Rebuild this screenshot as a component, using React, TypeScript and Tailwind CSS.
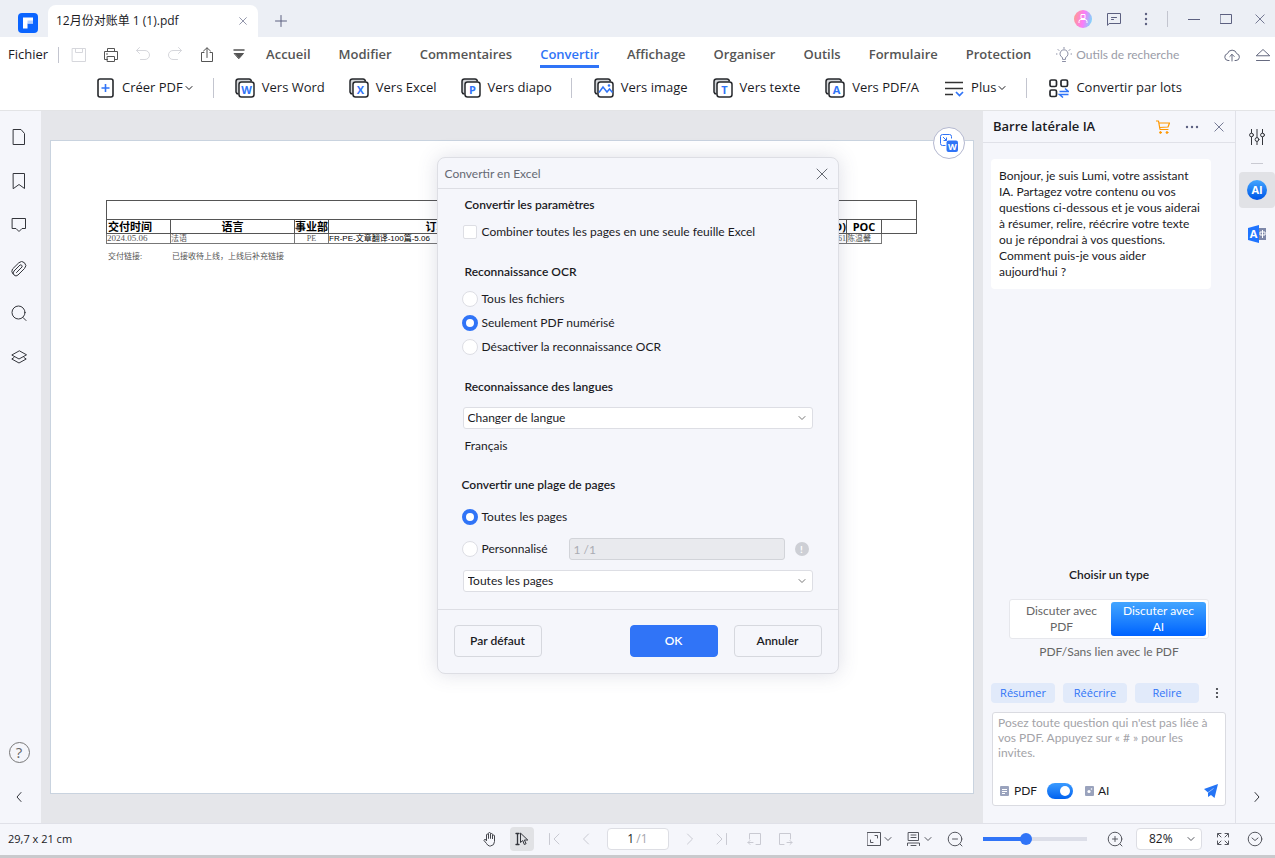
import { useState } from 'react';
import type { ReactNode } from 'react';

const MENU = ['Accueil', 'Modifier', 'Commentaires', 'Convertir', 'Affichage', 'Organiser', 'Outils', 'Formulaire', 'Protection'];

function Icon({ children, size = 16, box = 16, className = '', width = 1 }: {
  children: ReactNode; size?: number; box?: number; className?: string; width?: number;
}) {
  return (
    <svg width={size} height={size} viewBox={`0 0 ${box} ${box}`} fill="none" stroke="currentColor"
      strokeWidth={width} strokeLinecap="round" strokeLinejoin="round" className={`shrink-0 ${className}`} aria-hidden="true">
      {children}
    </svg>
  );
}

const Chevron = ({ size = 8, className = '' }: { size?: number; className?: string }) => (
  <Icon size={size} box={8} className={className}><path d="M1 2.5 4 5.5 7 2.5" /></Icon>
);

const Close = ({ size = 12 }: { size?: number }) => (
  <Icon size={size} box={12}><path d="M1 1 11 11M11 1 1 11" /></Icon>
);

const Divider = ({ className }: { className: string }) => <span className={`w-px shrink-0 bg-[#c3c5cf] ${className}`} />;

function TitleBar() {
  return (
    <header className="flex h-[37px] items-end bg-[#eceff5] text-[#5c6080]">
      <div className="flex h-[37px] w-12 items-center justify-end pt-2 pr-[10px]">
        <svg width="20" height="20" viewBox="0 0 20 20" aria-hidden="true">
          <rect width="20" height="20" rx="4" fill="#0a64ff" />
          <path d="M5 4.5h10v6H9.500v5H5z" fill="#fff" />
          <path d="M9.500 7.500H15v3H9.500z" fill="#b5d0ff" />
        </svg>
      </div>
      <div className="flex h-8 w-[210px] items-center justify-between rounded-t-lg bg-white pr-[11px] pl-2">
        <span className="text-[12px] text-[#1b1b1f]">12月份对账单 1 (1).pdf</span>
        <button aria-label="Fermer l'onglet"><Close size={8} /></button>
      </div>
      <button aria-label="Nouvel onglet" className="ml-[17px] flex h-8 items-center">
        <Icon size={12} box={12}><path d="M6 .5v11M.5 6h11" /></Icon>
      </button>
      <div className="ml-auto flex h-[37px] items-center pr-[10px]">
        <button aria-label="Compte">
          <svg width="18" height="18" viewBox="0 0 18 18" aria-hidden="true">
            <defs>
              <linearGradient id="avatar" x1="0" y1="0.300" x2="1" y2="0.500">
                <stop offset="0" stopColor="#ff9a8f" /><stop offset=".55" stopColor="#fb7bfa" /><stop offset="1" stopColor="#7fd4fb" />
              </linearGradient>
            </defs>
            <circle cx="9" cy="9" r="9" fill="url(#avatar)" />
            <path d="M7 4.500h4v4H7zM5 13v-1.500q0-2 2-2h4q2 0 2 2V13" fill="none" stroke="#fff" strokeLinejoin="round" />
          </svg>
        </button>
        <button aria-label="Messages" className="ml-[15px]">
          <Icon size={14} box={14}><path d="M.5 13V1.500h13v10H2.500zM4.500 5.500h5M4.500 7.500h2" /></Icon>
        </button>
        <button aria-label="Plus d'options" className="ml-[17px]">
          <Icon box={16} className="fill-current stroke-none"><circle cx="8" cy="3" r="1.200" /><circle cx="8" cy="8" r="1.200" /><circle cx="8" cy="13" r="1.200" /></Icon>
        </button>
        <Divider className="ml-[13px] h-4" />
        <button aria-label="Réduire" className="ml-5"><Icon size={12} box={12}><path d="M0 6.500h12" /></Icon></button>
        <button aria-label="Agrandir" className="ml-5"><Icon size={12} box={12}><path d="M.5 1.500h11v9H.5z" /></Icon></button>
        <button aria-label="Fermer" className="ml-[23px]"><Close size={10} /></button>
      </div>
    </header>
  );
}

function MenuBar() {
  return (
    <nav className="flex h-[35px] items-center bg-white text-[13px] text-[#555]">
      <a href="#fichier" className="pl-2 text-[#1b1b1f]">Fichier</a>
      <Divider className="ml-[10px] h-4" />
      <div className="ml-3 flex items-center gap-4">
        <button aria-label="Enregistrer" className="text-[#d6d7dc]">
          <Icon><path d="M1.500 1.500h13v13h-13zM4.500 1.500v4h7v-4" /></Icon>
        </button>
        <button aria-label="Imprimer">
          <Icon><path d="M4.500 4.500v-3h7v3M4.500 12.500h-3v-8h13v8h-3M4.500 9.500h7v5h-7zM3.500 7h1" /></Icon>
        </button>
        <button aria-label="Annuler l'action" className="text-[#d6d7dc]">
          <Icon><path d="M4.500.5l-3 3 3 3M1.500 3.500h8.500a4.500 4.500 0 0 1 0 9H5.500" /></Icon>
        </button>
        <button aria-label="Rétablir" className="text-[#d6d7dc]">
          <Icon><path d="M11.500.5l3 3-3 3M14.500 3.500H6a4.500 4.500 0 0 0 0 9h4.500" /></Icon>
        </button>
        <button aria-label="Partager">
          <Icon><path d="M5 5.500H2.500v9h11v-9H11M8 10.500V1M4.500 4 8 .8 11.500 4" /></Icon>
        </button>
        <button aria-label="Personnaliser">
          <Icon><path d="M3 3h10" strokeWidth="1.500" /><path d="M3.500 6.500h9L8 11.500z" fill="currentColor" /></Icon>
        </button>
      </div>
      <div className="ml-[19px] flex h-full gap-7 font-semibold">
        {MENU.map(name => (
          <a key={name} href={`#${name.toLowerCase()}`}
            className={`flex h-[31px] items-center border-b-[3px] pt-[7px] ${name === 'Convertir' ? 'border-[#3074f7] text-[#3074f7]' : 'border-transparent'}`}>
            {name}
          </a>
        ))}
      </div>
      <label className="ml-[25px] flex min-w-0 items-center gap-1 font-['Lato',sans-serif] text-[12px] text-[#9a9ca8]">
        <Icon className="text-[#8b8fa5]"><path d="M6.500 12V10.500a4 4 0 1 1 3 0V12zM6.500 14.500h3M8 1.500V0M3 3.500 2 2.500M13 3.500l1-1M1 7H0M15 7h1" /></Icon>
        <input placeholder="Outils de recherche" className="w-[110px] outline-none placeholder:text-[#9a9ca8]" />
      </label>
      <div className="ml-auto flex items-center gap-4 pr-[5px] text-[#666a80]">
        <button aria-label="Nuage"><Icon><path d="M5 13.500H4a3.500 3.500 0 0 1-.5-6.900 4.800 4.800 0 0 1 9.200 0A3.500 3.500 0 0 1 12 13.500h-1M8 14V7.500M5.800 9.500 8 7.300l2.200 2.200" /></Icon></button>
        <button aria-label="Réduire le ruban"><Icon size={14} box={14}><path d="M.5 7.500 7 1.500l6.500 6zM.5 12.500h13" /></Icon></button>
      </div>
    </nav>
  );
}

function StackIcon({ letter }: { letter?: string }) {
  return (
    <svg width="20" height="20" viewBox="0 0 20 20" fill="none" aria-hidden="true" className="shrink-0">
      <path d="M3.500 16A2.500 2.500 0 0 1 1 14V3.500Q1 1 3.500 1H14q2 0 2.500 2.500" fill="#d3d5d8" stroke="#26282c" strokeWidth="1.500" />
      <rect x="4" y="4" width="15" height="15" rx="2.500" fill="#fff" stroke="#26282c" strokeWidth="1.500" />
      {letter
        ? <text x="11.500" y="15.500" textAnchor="middle" fontSize="11" fontWeight="700" fill="#3074f7" className="font-['Open_Sans',sans-serif]">{letter}</text>
        : <><path d="M5 14.500 9 9l4 5 2.500-3 3 3.500" stroke="#3074f7" strokeWidth="1.500" /><circle cx="15" cy="7.500" r="1.300" fill="#3074f7" /></>}
    </svg>
  );
}

function Tool({ label, letter, children, chevron }: { label: string; letter?: string; children?: ReactNode; chevron?: boolean }) {
  return (
    <button className="flex items-center gap-[7px] whitespace-nowrap">
      {children ?? <StackIcon letter={letter} />}
      <span className="flex items-center gap-[2px]">{label}{chevron && <Chevron />}</span>
    </button>
  );
}

function Toolbar() {
  return (
    <div className="flex h-[39px] items-center border-b border-[#e3e4e6] bg-white pb-[6px] pl-[97px] text-[13px] text-[#1b1b1f]">
      <Tool label="Créer PDF" chevron>
        <svg width="18" height="20" viewBox="0 0 18 20" fill="none" aria-hidden="true">
          <rect x="1" y="1" width="15" height="18" rx="2" stroke="#26282c" strokeWidth="1.600" />
          <path d="M8.500 6v8M4.500 10h8" stroke="#3074f7" strokeWidth="1.600" />
        </svg>
      </Tool>
      <Divider className="mr-[21px] ml-5 h-5" />
      <div className="flex gap-6">
        <Tool label="Vers Word" letter="W" />
        <Tool label="Vers Excel" letter="X" />
        <Tool label="Vers diapo" letter="P" />
      </div>
      <Divider className="mr-[22px] ml-[19px] h-5" />
      <div className="flex gap-[25px]">
        <Tool label="Vers image" />
        <Tool label="Vers texte" letter="T" />
        <Tool label="Vers PDF/A" letter="A" />
        <Tool label="Plus" chevron>
          <svg width="20" height="20" viewBox="0 0 20 20" fill="none" aria-hidden="true">
            <path d="M1 4.500h18M1 10.500h18M1 16.500h8" stroke="#333" strokeWidth="1.500" />
            <path d="m12 14 3.500 3.500L19 14" stroke="#3074f7" strokeWidth="1.700" />
          </svg>
        </Tool>
      </div>
      <Divider className="mr-[22px] ml-5 h-5" />
      <Tool label="Convertir par lots">
        <svg width="20" height="20" viewBox="0 0 20 20" fill="none" aria-hidden="true">
          <g stroke="#26282c" strokeWidth="1.700">
            <rect x="1" y="2" width="6.500" height="6.500" rx="1.500" /><rect x="12" y="2" width="6.500" height="6.500" rx="1.500" /><rect x="1" y="12" width="6.500" height="6.500" rx="1.500" />
          </g>
          <path d="M10.500 13.500h9L16 10.500M19.500 16.500h-9l3.500 3" stroke="#3074f7" strokeWidth="1.500" />
        </svg>
      </Tool>
    </div>
  );
}

function LeftRail() {
  return (
    <aside className="flex w-[41px] shrink-0 flex-col items-center bg-[#f5f6fb] pt-[18px] pr-[3px] text-[#33353b]">
      <div className="flex flex-col gap-7">
        <button aria-label="Vignettes"><Icon><path d="M2.500.5h7.500l3.500 4v11h-11z" /></Icon></button>
        <button aria-label="Signets"><Icon><path d="M2.500.5h11v15L8 11.500l-5.500 4z" /></Icon></button>
        <button aria-label="Commentaires"><Icon><path d="M1.500 1.500h13v10H11l-3 3-3-3H1.500z" /></Icon></button>
        <button aria-label="Pièces jointes"><Icon><path d="M5.500 11.500 11 6A1.500 1.500 0 0 0 9 4L3 10a2.700 2.700 0 0 0 4 4l6.500-6.500a4 4 0 0 0-5.700-5.700L1.500 8A4 4 0 0 0 2 13" /></Icon></button>
        <button aria-label="Rechercher"><Icon><circle cx="7.500" cy="7.500" r="6.500" /><path d="m12 12.500 3 3" /></Icon></button>
        <button aria-label="Calques"><Icon><path d="M8 2 .8 6 8 10l7.200-4zM3 8.500.8 10 8 14l7.200-4L13 8.500" /></Icon></button>
      </div>
      <button aria-label="Aide" className="mt-auto flex size-[21px] items-center justify-center rounded-full border border-[#777] text-[15px] leading-none text-[#666]">?</button>
      <button aria-label="Replier" className="mt-7 mb-5"><Icon size={12} box={12}><path d="M8 1.500 4 6l4 4.500" /></Icon></button>
    </aside>
  );
}

function PdfPage() {
  return (
    <section className="min-w-0 flex-1 bg-[#e5e6ea] px-[9px] py-[29px]">
      <div className="h-full overflow-hidden border border-[#c9d3df] bg-white pt-[59px] pl-[55px]">
        <table className="w-[811px] table-fixed border-collapse text-black">
          <colgroup>
            <col className="w-16" /><col className="w-[124px]" /><col className="w-[34px]" /><col className="w-[216px]" />
            <col className="w-[302px]" /><col className="w-[35px]" /><col className="w-[35px]" />
          </colgroup>
          <tbody>
            <tr className="h-[19px]"><td colSpan={7} className="border border-[#555] p-0" /></tr>
            <tr className="h-[14px] text-[11px] leading-[13px] font-bold whitespace-nowrap [&>th]:border [&>th]:border-[#555]">
              <th className="p-0 pl-px text-left">交付时间</th><th className="p-0">语言</th><th className="p-0">事业部</th><th className="p-0">订单</th>
              <th className="p-0 text-right">金额(USD)</th><th className="p-0">POC</th><th className="p-0" />
            </tr>
            <tr className="h-[10px] font-['Liberation_Serif','Noto_Sans_CJK_SC',serif] text-[8px] leading-[9px] whitespace-nowrap text-[#555] [&>td]:p-0">
              <td className="border border-[#777] text-[9px]">2024.05.06</td>
              <td className="border border-[#777]">法语</td>
              <td className="border border-[#777] text-center">PE</td>
              <td className="border border-[#777] font-['Liberation_Sans','Noto_Sans_CJK_SC',sans-serif] text-black">FR-PE-文章翻译-100篇-5.06</td>
              <td className="border border-[#777] text-right">61</td>
              <td className="border border-[#777]">陈温馨</td>
              <td />
            </tr>
          </tbody>
        </table>
        <p className="flex pt-[6px] pl-[2px] text-[8px] leading-[11px] text-[#555]">
          <span className="w-16">交付链接:</span><span>已接收待上线，上线后补充链接</span>
        </p>
      </div>
    </section>
  );
}

function ConvertBadge() {
  return (
    <button aria-label="Convertir en Word" className="absolute top-[127px] right-[310px] flex size-8 items-center justify-center rounded-full border border-[#b4b8d0] bg-white">
      <svg width="18" height="18" viewBox="0 0 18 18" fill="none" aria-hidden="true">
        <path d="M5.500 11.500h-3a2 2 0 0 1-2-2v-7q0-2 2-2h7q2 0 2 2v2M3 3l3.500 3.500M6.500 3.500v3h-3" stroke="#3074f7" />
        <rect x="6.500" y="6.500" width="11.500" height="11.500" rx="2" fill="#3074f7" />
        <text x="12.300" y="15.500" textAnchor="middle" fontSize="9" fontWeight="700" fill="#fff" className="font-['Open_Sans',sans-serif]">W</text>
      </svg>
    </button>
  );
}

function AiPanel() {
  const [link, setLink] = useState(true);
  return (
    <aside className="flex w-[252px] shrink-0 flex-col bg-[#f5f6fb] text-[#1b1b1f]">
      <div className="flex h-8 items-center border-b border-[#e0e1e8] pr-[11px] pl-[10px]">
        <h2 className="text-[13px] font-semibold">Barre latérale IA</h2>
        <div className="ml-auto flex items-center gap-[15px] text-[#5c6080]">
          <button aria-label="Boutique" className="text-[#ff9800]">
            <Icon size={14} box={14}><path d="M.5 1h2l1.500 8.500h8M3 3h10.500l-1.500 4-8.500.5" strokeWidth="1.200" /><circle cx="4.500" cy="12.500" r=".9" fill="currentColor" /><circle cx="11" cy="12.500" r=".9" fill="currentColor" /></Icon>
          </button>
          <button aria-label="Options">
            <Icon size={14} box={14} className="fill-current stroke-none"><circle cx="2" cy="7" r="1.200" /><circle cx="7" cy="7" r="1.200" /><circle cx="12" cy="7" r="1.200" /></Icon>
          </button>
          <button aria-label="Fermer le panneau"><Close size={10} /></button>
        </div>
      </div>
      <p className="mx-2 mt-4 w-[220px] rounded-[4px] bg-white py-[9px] pr-2 pl-2 font-['Lato',sans-serif] text-[12px] leading-4">
        Bonjour, je suis Lumi, votre assistant IA. Partagez votre contenu ou vos questions ci-dessous et je vous aiderai à résumer, relire, réécrire votre texte ou je répondrai à vos questions. Comment puis-je vous aider aujourd'hui ?
      </p>
      <div className="mt-auto flex flex-col pb-[17px] font-['Lato',sans-serif] text-[12px] leading-4">
        <h3 className="text-center font-semibold">Choisir un type</h3>
        <div className="mx-auto mt-4 flex h-10 w-[200px] rounded-[3px] border border-[#e6e7ec] bg-white p-[2px] text-[#666]">
          <button className="flex-1 px-3">Discuter avec PDF</button>
          <button className="w-[95px] rounded-[3px] bg-linear-to-b from-[#42a5ff] to-[#0061ff] px-2 text-white">Discuter avec AI</button>
        </div>
        <p className="mt-[5px] text-center text-[#666]">PDF/Sans lien avec le PDF</p>
        <div className="mt-[23px] flex items-center gap-2 px-2 font-['Open_Sans',sans-serif] text-[11px] text-[#3074f7]">
          <button className="h-5 w-16 rounded-[4px] bg-[#e1eafa]">Résumer</button>
          <button className="h-5 w-16 rounded-[4px] bg-[#e1eafa]">Réécrire</button>
          <button className="h-5 w-16 rounded-[4px] bg-[#e1eafa]">Relire</button>
          <button aria-label="Plus d'actions" className="ml-1 text-[#33353b]">
            <Icon size={12} box={12} className="fill-current stroke-none"><circle cx="6" cy="2" r="1.100" /><circle cx="6" cy="6" r="1.100" /><circle cx="6" cy="10" r="1.100" /></Icon>
          </button>
        </div>
        <div className="mx-[9px] mt-[9px] flex h-[94px] flex-col rounded-[3px] border border-[#dadbe1] bg-white">
          <textarea aria-label="Question" placeholder="Posez toute question qui n'est pas liée à vos PDF. Appuyez sur « # » pour les invites."
            className="min-h-0 flex-1 resize-none overflow-hidden pt-[2px] pr-3 pl-[5px] leading-[15px] outline-none placeholder:text-[#a3a3a8]" />
          <div className="flex h-7 items-center px-[7px]">
            <svg width="9" height="10" viewBox="0 0 9 10" aria-hidden="true"><rect width="9" height="10" rx="1" fill="#9aa3bd" /><path d="M2 3.500h5M2 5.500h5M2 7.500h3" stroke="#fff" /></svg>
            <span className="ml-[5px] w-[21px]">PDF</span>
            <input type="checkbox" role="switch" aria-label="Lier au PDF" checked={link} onChange={e => setLink(e.target.checked)}
              className="ml-3 flex h-4 w-[26px] appearance-none items-center justify-end rounded-full bg-linear-to-b from-[#3a9bff] to-[#0061ef] px-[3px] before:size-[10px] before:rounded-full before:bg-white" />
            <svg width="9" height="10" viewBox="0 0 9 10" aria-hidden="true" className="ml-3"><rect width="9" height="10" rx="1" fill="#9aa3bd" /><circle cx="4" cy="5.500" r="1.600" fill="#fff" /><circle cx="6.500" cy="3" r=".8" fill="#fff" /></svg>
            <span className="ml-1">AI</span>
            <button aria-label="Envoyer" className="ml-auto">
              <svg width="14" height="14" viewBox="0 0 14 14" aria-hidden="true"><path d="M14 0 10.500 14 7 11 4 13V8.500L0 5z" fill="#2474f5" /><path d="M4 8.500 9.500 4.500" stroke="#fff" strokeWidth=".5" fill="none" /></svg>
            </button>
          </div>
        </div>
      </div>
    </aside>
  );
}

function RightRail() {
  return (
    <aside className="flex w-10 shrink-0 flex-col items-center border-l border-[#e0e1e8] bg-[#f5f6fb] pt-[18px] pl-[3px] text-[#33353b]">
      <button aria-label="Réglages"><Icon><path d="M2.500 0v4M2.500 8v8M8 0v8.500M8 12.500V16M13.500 0v4M13.500 8v8" /><circle cx="2.500" cy="6" r="1.900" /><circle cx="8" cy="10.500" r="1.900" /><circle cx="13.500" cy="6" r="1.900" /></Icon></button>
      <span className="mt-[18px] h-px w-3 bg-[#c9cad2]" />
      <button className="mt-2 flex size-9 items-center justify-center rounded-[4px] bg-[#e1e2e6]" aria-label="Assistant">
        <span className="flex size-5 items-center justify-center rounded-full bg-linear-to-b from-[#42a5ff] to-[#0051e6] text-[11px] font-bold text-white">AI</span>
      </button>
      <button aria-label="Traduire" className="mt-4">
        <svg width="18" height="20" viewBox="0 0 18 20" aria-hidden="true">
          <path d="M10 4h8v12h-8z" fill="#7d87a8" /><path d="M12 8h5v3h-5zM14.500 6v8" fill="none" stroke="#fff" />
          <path d="M0 4 11 1v18L0 16z" fill="#1f74ff" />
          <text x="5.500" y="14" textAnchor="middle" fontSize="11" fontWeight="700" fill="#fff" className="font-['Open_Sans',sans-serif]">A</text>
        </svg>
      </button>
      <button aria-label="Replier" className="mt-auto mb-5"><Icon size={12} box={12}><path d="m4 1.500 4 4.500-4 4.500" /></Icon></button>
    </aside>
  );
}

const statusButton = 'flex h-6 w-8 items-center justify-center';

function StatusBar() {
  const [zoom, setZoom] = useState(40);
  return (
    <footer className="flex h-8 items-center border-t border-[#e0e1e8] bg-[#f5f6fb] pb-px text-[12px] text-[#55575f]">
      <div className="flex-1 pr-1 pl-2 text-[11px] text-[#1b1b1f]">29,7 x 21 cm</div>
      <div className="flex items-center text-[#c9cad2]">
        <button aria-label="Main" className={`${statusButton} text-[#44464c]`}>
          <Icon><path d="M4.500 9.500V4a1 1 0 0 1 2 0v3.500V2.500a1 1 0 0 1 2 0v5-4a1 1 0 0 1 2 0v4.500V5a1 1 0 0 1 2 0v5.500q0 4-4 4.500H7.500q-2-.5-3-2.500L2 9.500q0-1.500 1.500-1z" /></Icon>
        </button>
        <button aria-label="Sélection" className="mx-1 flex size-6 items-center justify-center rounded-[4px] bg-[#e1e2e5] text-[#33353b]">
          <Icon><path d="M2 2.500h3M3.500 2.500v11M2 13.500h3" strokeWidth="1.300" /><path d="M6.500 2.500v9l2.300-2 1.500 4 1.800-.8-1.700-3.700h3z" /></Icon>
        </button>
        <button aria-label="Première page" className={statusButton}><Icon size={12} box={12}><path d="M1.500.5v11M11 1 6 6l5 5" /></Icon></button>
        <button aria-label="Page précédente" className={statusButton}><Icon size={12} box={12}><path d="M8.500 1l-5 5 5 5" /></Icon></button>
        <label className="mx-[5px] flex h-[22px] w-[62px] items-center justify-center rounded-[4px] border border-[#dddee4] bg-white text-[#a5a6ad]">
          <input aria-label="Page" defaultValue="1" className="w-[9px] text-[#1b1b1f] outline-none" />/1
        </label>
        <button aria-label="Page suivante" className={statusButton}><Icon size={12} box={12}><path d="m3.500 1 5 5-5 5" /></Icon></button>
        <button aria-label="Dernière page" className={statusButton}><Icon size={12} box={12}><path d="M10.500.5v11M1 1l5 5-5 5" /></Icon></button>
        <button aria-label="Vue précédente" className={statusButton}><Icon size={14} box={14}><path d="M2.500 7V1.500h11v11H9M1 10.500h5M3 8.500l-2 2 2 2" /></Icon></button>
        <button aria-label="Vue suivante" className={statusButton}><Icon size={14} box={14}><path d="M11.500 7V1.500H.5v11H5M13 10.500H8M11 8.500l2 2-2 2" /></Icon></button>
      </div>
      <div className="flex flex-1 items-center justify-end pr-3">
        <button aria-label="Ajuster" className="flex items-center gap-[3px]">
          <Icon size={14} box={14}><path d="M.5.5h13v13H.5zM8 3.500h2.500V6M6 10.500H3.500V8" /></Icon><Chevron />
        </button>
        <button aria-label="Affichage" className="ml-[15px] flex items-center gap-[3px]">
          <Icon size={14} box={14}><path d="M1.500.5h10v8h-10zM4 3h5M4 5.500h5M.5 13.500v-2.500h12v2.500M4 13.500h5" /></Icon><Chevron />
        </button>
        <button aria-label="Zoom arrière" className="ml-[15px]"><Icon><circle cx="8" cy="8" r="6.800" /><path d="M5.500 8h5M13 13l2 2" /></Icon></button>
        <input type="range" aria-label="Zoom" value={zoom} onChange={e => setZoom(Number(e.target.value))}
          style={{ backgroundImage: `linear-gradient(to right, #3074f7 ${zoom}%, #dcdee8 ${zoom}%)` }}
          className="mx-5 h-1 w-[104px] appearance-none [&::-webkit-slider-thumb]:size-3 [&::-webkit-slider-thumb]:appearance-none [&::-webkit-slider-thumb]:rounded-full [&::-webkit-slider-thumb]:bg-[#3074f7]" />
        <button aria-label="Zoom avant"><Icon><circle cx="8" cy="8" r="6.800" /><path d="M5.500 8h5M8 5.500v5M13 13l2 2" /></Icon></button>
        <div className="relative ml-[13px] flex items-center">
          <select aria-label="Niveau de zoom" className="h-[22px] w-[66px] appearance-none rounded-[4px] border border-[#dddee4] bg-white pl-3 text-[#1b1b1f]"><option>82%</option></select>
          <Chevron className="pointer-events-none absolute right-[7px]" />
        </div>
        <button aria-label="Plein écran" className="ml-[13px]"><Icon><path d="M2.500 6V2.500H6M10 2.500h3.500V6M13.500 10v3.500H10M6 13.500H2.500V10M3 3l3 3M13 3l-3 3M13 13l-3-3M3 13l3-3" /></Icon></button>
        <button aria-label="Plus" className="ml-4"><Icon><circle cx="8" cy="8" r="6.800" /><path d="M5 7 8 9.500 11 7" /></Icon></button>
      </div>
    </footer>
  );
}

function Radio({ name, label, checked, onChange }: { name: string; label: string; checked: boolean; onChange: () => void }) {
  return (
    <label className="-ml-[3px] flex h-4 items-center gap-1">
      <input type="radio" name={name} checked={checked} onChange={onChange}
        className="size-4 shrink-0 appearance-none rounded-full border border-[#dddee4] bg-white checked:border-4 checked:border-[#3074f7]" />
      {label}
    </label>
  );
}

function Select({ label, value }: { label: string; value: string }) {
  return (
    <div className="relative -ml-[2px] flex items-center">
      <select aria-label={label} className="h-[22px] w-full appearance-none rounded-[3px] border border-[#dddee4] bg-white pl-1"><option>{value}</option></select>
      <Chevron className="pointer-events-none absolute right-[7px] text-[#777]" />
    </div>
  );
}

function ConvertDialog() {
  const [ocr, setOcr] = useState('Seulement PDF numérisé');
  const [range, setRange] = useState('all');
  const action = 'h-8 w-[88px] rounded-[4px] border font-semibold';
  return (
    <div role="dialog" aria-labelledby="dialog-title" className="w-[402px] rounded-lg border border-[#dddee4] bg-[#f5f6fb] font-['Lato',sans-serif] text-[12px] leading-4 text-[#1b1b1f] shadow-[0_0_20px_rgba(70,80,120,0.18)]">
      <div className="flex h-[31px] items-center justify-between border-b border-[#dddee4] pt-px pr-[10px] pl-[7px] text-[#666a73]">
        <h1 id="dialog-title">Convertir en Excel</h1>
        <button aria-label="Fermer la fenêtre"><Close /></button>
      </div>
      <div className="flex flex-col pt-2 pr-[25px] pb-[17px] pl-[27px]">
        <h2 className="font-semibold">Convertir les paramètres</h2>
        <label className="mt-[11px] -ml-[2px] flex h-4 items-center gap-[5px]">
          <input type="checkbox" className="size-[14px] appearance-none rounded-[2px] border border-[#dddee4] bg-white checked:bg-[#3074f7]" />
          Combiner toutes les pages en une seule feuille Excel
        </label>
        <h2 className="mt-6 font-semibold">Reconnaissance OCR</h2>
        <div className="mt-[11px] flex flex-col gap-2">
          {['Tous les fichiers', 'Seulement PDF numérisé', 'Désactiver la reconnaissance OCR'].map(o => (
            <Radio key={o} name="ocr" label={o} checked={ocr === o} onChange={() => setOcr(o)} />
          ))}
        </div>
        <h2 className="mt-6 mb-3 font-semibold">Reconnaissance des langues</h2>
        <Select label="Langue" value="Changer de langue" />
        <p className="mt-[9px]">Français</p>
        <h2 className="mt-[23px] mb-4 -ml-[3px] font-semibold">Convertir une plage de pages</h2>
        <Radio name="range" label="Toutes les pages" checked={range === 'all'} onChange={() => setRange('all')} />
        <div className="mt-[13px] mb-[10px] flex h-[22px] items-center">
          <Radio name="range" label="Personnalisé" checked={range === 'custom'} onChange={() => setRange('custom')} />
          <input aria-label="Plage de pages" disabled value="1 /1" className="mr-[10px] ml-auto h-[22px] w-[216px] rounded-[3px] border border-[#d2d4d9] bg-[#e9eaee] pl-1 text-[#aaacb3]" />
          <span className="mr-1 flex size-[14px] items-center justify-center rounded-full bg-[#cdcfd5] text-[10px] leading-none font-bold text-white">!</span>
        </div>
        <Select label="Pages" value="Toutes les pages" />
      </div>
      <div className="flex border-t border-[#dddee4] px-4 pt-[15px] pb-4">
        <button className={`${action} border-[#d6d8de]`}>Par défaut</button>
        <button className={`${action} mr-4 ml-auto border-[#3074f7] bg-[#3074f7] text-white`}>OK</button>
        <button className={`${action} border-[#d6d8de]`}>Annuler</button>
      </div>
    </div>
  );
}

export default function App() {
  return (
    <div className="relative flex min-h-screen flex-col bg-[#c9cacd] font-['Open_Sans','Noto_Sans_CJK_SC',sans-serif]">
      <TitleBar />
      <MenuBar />
      <Toolbar />
      <main className="flex flex-1">
        <LeftRail />
        <PdfPage />
        <AiPanel />
        <RightRail />
      </main>
      <StatusBar />
      <div className="h-[3px]" />
      <ConvertBadge />
      <div className="absolute inset-0 flex items-center justify-center pb-[27px]">
        <ConvertDialog />
      </div>
    </div>
  );
}
